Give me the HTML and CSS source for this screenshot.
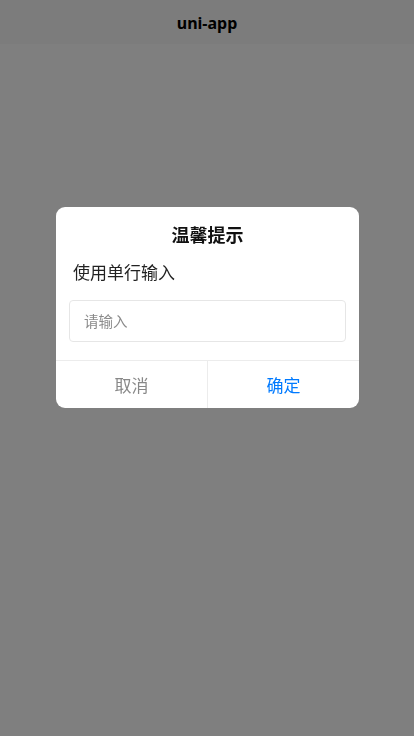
FILE: index.html
```html
<!DOCTYPE html>
<html lang="zh-CN">
<head>
<meta charset="utf-8">
<meta name="viewport" content="width=device-width, initial-scale=1">
<title>uni-app</title>
<link rel="stylesheet" href="styles.css">
</head>
<body>
<div class="page">
  <header class="navbar"><span class="nav-title">uni-app</span></header>
  <main class="content"></main>
</div>
<div class="mask">
  <div class="dialog">
    <div class="dialog-title">温馨提示</div>
    <div class="dialog-text">使用单行输入</div>
    <div class="dialog-body">
      <input class="dialog-input" type="text" placeholder="请输入">
    </div>
    <div class="dialog-buttons">
      <div class="btn btn-cancel">取消</div>
      <div class="btn btn-ok">确定</div>
    </div>
  </div>
</div>
</body>
</html>
```

FILE: styles.css
```css
html, body {
  margin: 0;
  padding: 0;
  height: 100%;
}
body {
  font-family: "Noto Sans", "Noto Sans CJK SC", sans-serif;
  background: #ffffff;
}
.page {
  display: flex;
  flex-direction: column;
  height: 100%;
}
.navbar {
  height: 44px;
  flex: none;
  background: #f8f8f8;
  display: flex;
  align-items: center;
  justify-content: center;
}
.nav-title {
  font-size: 16px;
  font-weight: 700;
  color: #000;
  padding-top: 1px;
}
.content {
  flex: 1;
  background: #fff;
}
.mask {
  position: fixed;
  inset: 0;
  background: rgba(0, 0, 0, 0.5);
  display: flex;
  flex-direction: column;
  align-items: center;
  padding-top: 207px;
  box-sizing: border-box;
}
.dialog {
  width: 303px;
  margin-left: 1px;
  background: #fff;
  border-radius: 9px;
  overflow: hidden;
  display: flex;
  flex-direction: column;
}
.dialog-title {
  padding-top: 16px;
  text-align: center;
  font-size: 18px;
  line-height: 24px;
  font-weight: 700;
  color: #111;
}
.dialog-text {
  margin-top: 14px;
  padding: 0 17px;
  font-size: 17px;
  line-height: 24px;
  color: #222;
}
.dialog-body {
  padding: 15px 13px 18px;
}
.dialog-input {
  display: block;
  width: 100%;
  height: 42px;
  box-sizing: border-box;
  border: 1px solid #e6e6e6;
  border-radius: 4px;
  padding: 0 14px;
  font-family: "Noto Sans", "Noto Sans CJK SC", sans-serif;
  font-size: 14.5px;
  color: #333;
  outline: none;
  background: #fff;
}
.dialog-input::placeholder {
  color: #8a8a8a;
}
.dialog-buttons {
  display: flex;
  border-top: 1px solid #ececec;
  height: 47px;
}
.btn {
  flex: 1;
  display: flex;
  align-items: center;
  justify-content: center;
  font-size: 17px;
}
.btn-cancel {
  color: #888;
  border-right: 1px solid #ececec;
}
.btn-ok {
  color: #007aff;
}
```
